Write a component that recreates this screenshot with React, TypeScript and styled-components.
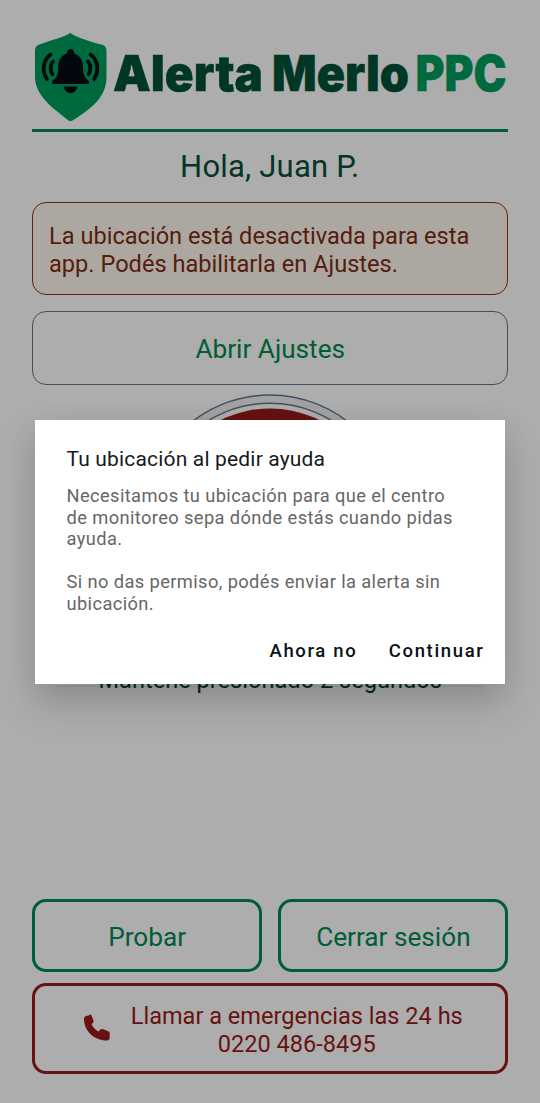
import React from "react";
import styled, { createGlobalStyle } from "styled-components";

const GlobalStyle = createGlobalStyle`
  * { box-sizing: border-box; }
  body { margin: 0; background: #fff; font-family: Roboto, sans-serif; }
  p, h1, h2 { margin: 0; font-weight: 400; }
  button { font-family: inherit; background: none; padding: 0; }
`;

const Screen = styled.div`
  position: relative;
  width: 540px;
  height: 1103px;
  overflow: hidden;
  background: #fff;
`;

const Page = styled.main`
  display: flex;
  flex-direction: column;
  height: 100%;
  padding: 29px 32px 29px 31.5px;
`;

const Header = styled.header`
  height: 103px;
  border-bottom: 3px solid #008a50;
`;

const Logo = styled.svg`
  display: block;
  width: 477px;
  height: 98px;
  overflow: visible;
  font-family: Inter, sans-serif;
  font-weight: 900;
`;

const Greeting = styled.h1`
  margin-top: 15px;
  height: 39px;
  line-height: 39px;
  text-align: center;
  white-space: nowrap;
  font-size: 31px;
  letter-spacing: 0.2px;
  color: #064e3b;
`;

const Notice = styled.section`
  margin-top: 16px;
  height: 93px;
  padding: 18.5px 16.5px;
  border: 1.5px solid #8f3413;
  border-radius: 14px;
  background: #fff7ed;
  color: #7c2d12;
  font-size: 23.6px;
  line-height: 28px;
  white-space: nowrap;
`;

const Button = styled.button<{ $tone: "plain" | "green" | "red"; $height: number }>`
  flex: 1 1 0;
  display: flex;
  align-items: center;
  justify-content: center;
  height: ${(p) => p.$height}px;
  padding: ${(p) => (p.$tone === "red" ? "3px 0 0 7px" : "3px 0 0 1px")};
  border: ${(p) => (p.$tone === "plain" ? "1.5px" : "3px")} solid
    ${(p) => ({ plain: "#64748b", green: "#008a50", red: "#991b1b" })[p.$tone]};
  border-radius: 14px;
  color: ${(p) => (p.$tone === "red" ? "#991b1b" : "#008a50")};
  font-size: ${(p) => (p.$tone === "red" ? 23.55 : 26.2)}px;
  line-height: 28px;
  white-space: nowrap;
`;

const Row = styled.div<{ $top: number }>`
  display: flex;
  gap: 16px;
  margin-top: ${(p) => p.$top}px;
`;

const Panic = styled.svg`
  align-self: center;
  flex: none;
  width: 256px;
  height: 256px;
  margin-top: 9.5px;
`;

const Hint = styled.p`
  align-self: center;
  flex: none;
  width: 430px;
  height: 30px;
  margin-top: 6.5px;
  padding-left: 1px;
  line-height: 46px;
  border-bottom: 1px solid #e6efeb;
  text-align: center;
  white-space: nowrap;
  font-size: 23.6px;
  color: #063d30;
`;

const Footer = styled.footer`
  margin-top: auto;
`;

const Phone = styled.svg`
  width: 26px;
  height: 27px;
  margin: -4px 21px 0 0;
`;

const Scrim = styled.div`
  position: absolute;
  inset: 0;
  padding: 420px 35px 0;
  background: rgba(0, 0, 0, 0.32);
`;

const Dialog = styled.section`
  height: 263.5px;
  padding: 24px 20.5px 0 31.5px;
  background: #fff;
  box-shadow: 0 20px 36px rgba(0, 0, 0, 0.16), 0 6px 28px rgba(0, 0, 0, 0.06);
  white-space: nowrap;
`;

const DialogTitle = styled.h2`
  height: 30px;
  line-height: 30px;
  font-size: 21px;
  letter-spacing: 0.17px;
  color: #141a1c;
`;

const DialogText = styled.p`
  margin: 11px 0 21.5px;
  font-size: 18.3px;
  line-height: 21.5px;
  letter-spacing: 0.39px;
  color: #666;
  & + & { margin-top: 0; }
`;

const Actions = styled.div`
  display: flex;
  justify-content: flex-end;
  gap: 31.5px;
  margin-top: 1px;
`;

const Action = styled.button`
  height: 30px;
  border: 0;
  font-size: 18.5px;
  font-weight: 500;
  letter-spacing: 1.65px;
  color: #0b1114;
`;

export default function App() {
  return (
    <Screen>
      <GlobalStyle />
      <Page>
        <Header>
          <Logo viewBox="32 29 477 98">
            <path
              d="M70.500 33C74 36 84 40 103 45Q106.500 46.500 106.500 51V77C106.500 96 93 107 78 117L72.500 120.500Q70.500 121.500 68.500 120.500C56 110 35 97 35 77V51Q35 46.500 38 45C52 40 64 37 68.500 34Q69.500 33 70.500 33Z"
              fill="#009d5d"
            />
            <path
              d="M70.500 49a3.800 3.800 0 0 1 3.700 4.500C80 55.500 83 60 83 67c0 8 1.500 10 5 13.200 2 2 1.200 3.800-1 3.800H54.200c-2.500 0-3-2-1-3.800 3.500-3.200 5-5.200 5-13.200 0-7 3-11.500 8.800-13.500A3.800 3.800 0 0 1 70.500 49ZM63.500 86.500h14.200c-.8 4-3.500 6.500-7 6.500s-6.300-2.500-7.200-6.500Z"
              fill="#050c16"
            />
            <path
              d="M50.500 54.500C42.500 60 42 72 47 79M53 61.500c-3 3-3 9.500-.5 12.700M90.500 54.500c8 5.500 8.500 17.500 3.500 24.500M88 61.500c3 3 3 9.500.5 12.700"
              fill="none"
              stroke="#050c16"
              strokeWidth="3.800"
              strokeLinecap="round"
            />
            <g fontSize="49" strokeWidth="0.500">
              <text x="113" y="91" textLength="150" lengthAdjust="spacingAndGlyphs" fill="#005236" stroke="#005236">Alerta</text>
              <text x="272" y="91" textLength="137" lengthAdjust="spacingAndGlyphs" fill="#005236" stroke="#005236">Merlo</text>
              <text x="415.500" y="91" textLength="91" lengthAdjust="spacingAndGlyphs" fill="#009d5d" stroke="#009d5d">PPC</text>
            </g>
          </Logo>
        </Header>
        <Greeting>Hola, Juan P.</Greeting>
        <Notice>
          La ubicación está desactivada para esta
          <br />
          app. Podés habilitarla en Ajustes.
        </Notice>
        <Row $top={16}>
          <Button $tone="plain" $height={73.5}>Abrir Ajustes</Button>
        </Row>
        <Panic viewBox="-128 -128 256 256">
          <circle r="127" fill="#eef1f1" stroke="#64748b" strokeWidth="1.400" />
          <circle r="118.800" fill="#fff" stroke="#64748b" strokeWidth="1.400" />
          <circle r="113.500" fill="#991b1b" />
        </Panic>
        <Hint>Mantené presionado 2 segundos</Hint>
        <Footer>
          <Row $top={0}>
            <Button $tone="green" $height={73.5}>Probar</Button>
            <Button $tone="green" $height={73.5}>Cerrar sesión</Button>
          </Row>
          <Row $top={10.5}>
            <Button $tone="red" $height={91.5}>
              <Phone viewBox="0 0 26 27">
                <path
                  d="M2 2 5.300 1.300Q6.300 -.500 7.300 1L9.500 6.500Q10 8 8.800 9L7.600 10.300C9 13.500 11.500 16 14.700 17.500L16.300 15.600Q17.300 14.600 18.700 15L24.300 17.200Q26 18 25.700 19.600V24Q25.300 26.500 23 26.500C9.500 26.500 0 16.500 0 5Q0 2.500 2 2Z"
                  fill="#991b1b"
                />
              </Phone>
              <span>
                Llamar a emergencias las 24 hs
                <br />
                0220 486-8495
              </span>
            </Button>
          </Row>
        </Footer>
      </Page>
      <Scrim>
        <Dialog role="dialog" aria-modal="true">
          <DialogTitle>Tu ubicación al pedir ayuda</DialogTitle>
          <DialogText>
            Necesitamos tu ubicación para que el centro
            <br />
            de monitoreo sepa dónde estás cuando pidas
            <br />
            ayuda.
          </DialogText>
          <DialogText>
            Si no das permiso, podés enviar la alerta sin
            <br />
            ubicación.
          </DialogText>
          <Actions>
            <Action>Ahora no</Action>
            <Action>Continuar</Action>
          </Actions>
        </Dialog>
      </Scrim>
    </Screen>
  );
}
